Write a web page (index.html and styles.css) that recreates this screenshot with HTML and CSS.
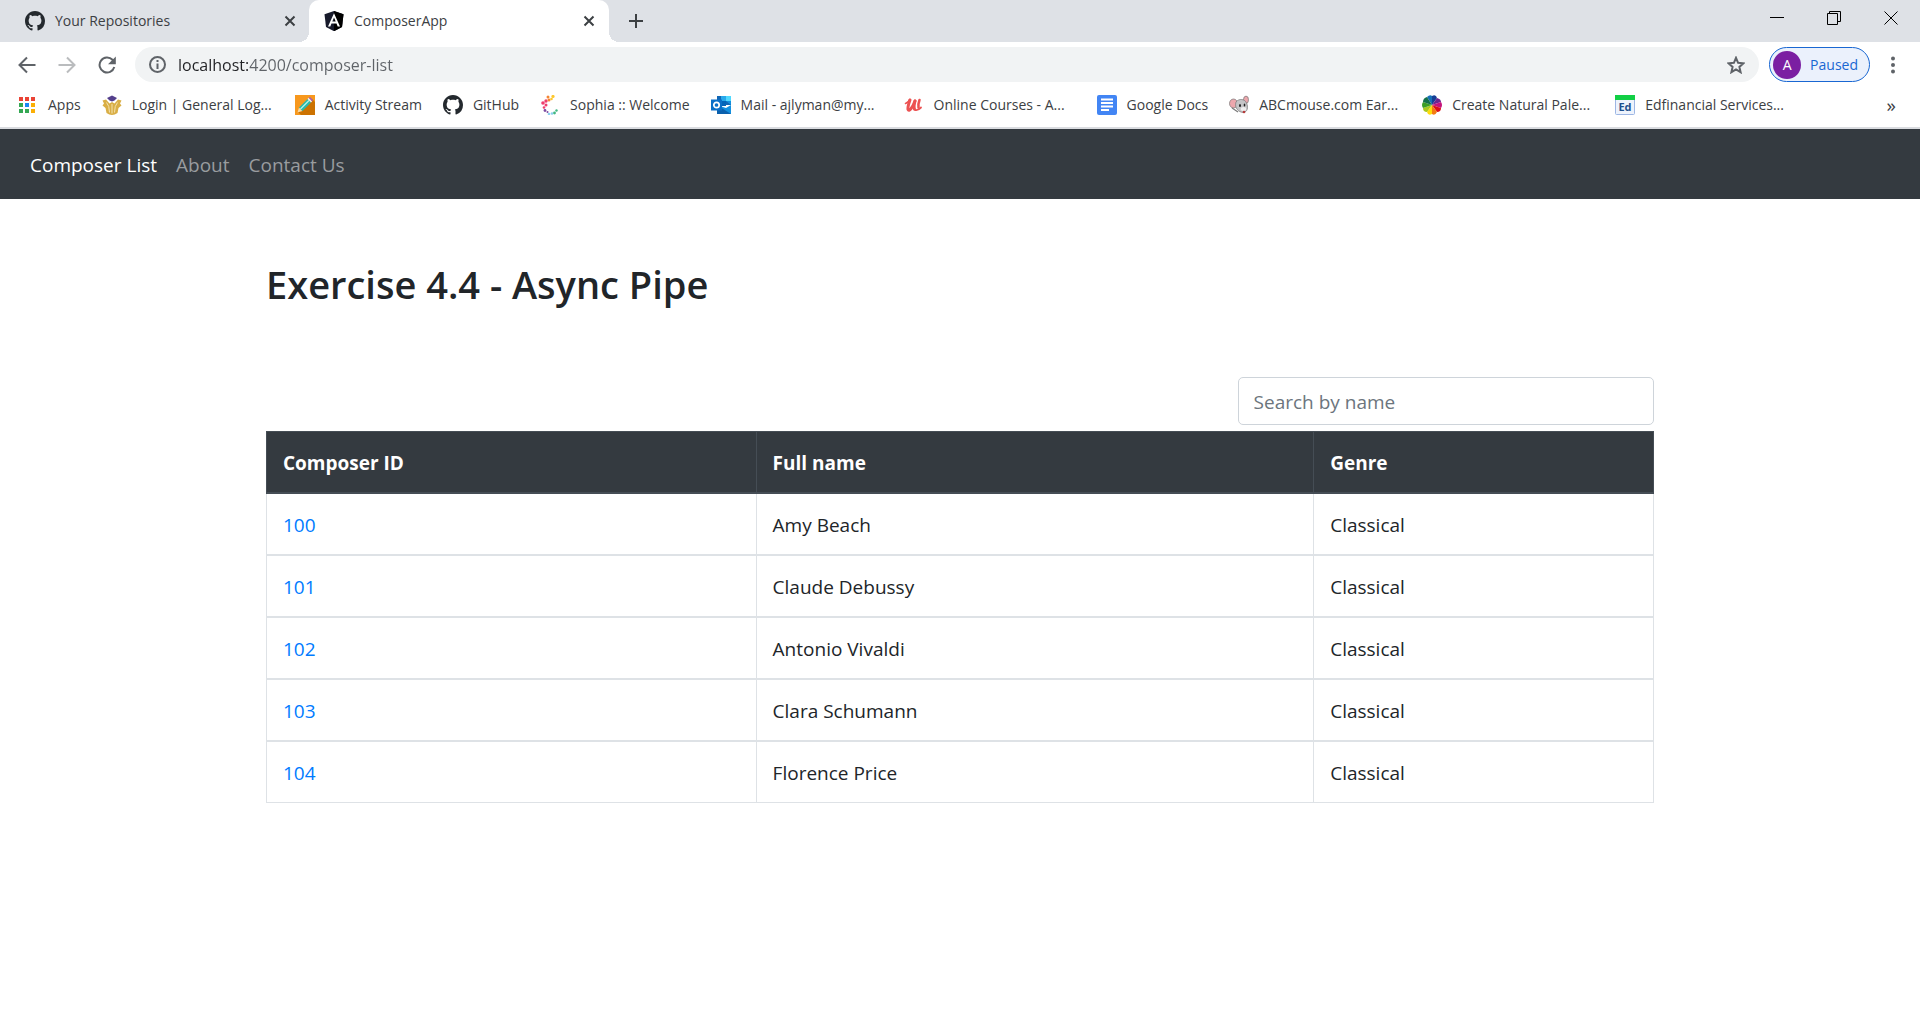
FILE: index.html
```html
<!DOCTYPE html>
<html lang="en">
<head>
<meta charset="utf-8">
<meta name="viewport" content="width=device-width, initial-scale=1">
<title>ComposerApp</title>
<link rel="stylesheet" href="styles.css">
</head>
<body>
<svg class="sprite" aria-hidden="true">
  <symbol id="github" viewBox="0 0 16 16"><path fill="#24292e" d="M8 0C3.58 0 0 3.58 0 8c0 3.54 2.29 6.53 5.47 7.59.4.07.55-.17.55-.38 0-.19-.01-.82-.01-1.49-2.01.37-2.53-.49-2.69-.94-.09-.23-.48-.94-.82-1.13-.28-.15-.68-.52-.01-.53.63-.01 1.08.58 1.23.82.72 1.21 1.87.87 2.33.66.07-.52.28-.87.51-1.07-1.78-.2-3.64-.89-3.64-3.95 0-.87.31-1.59.82-2.15-.08-.2-.36-1.02.08-2.12 0 0 .67-.21 2.2.82.64-.18 1.32-.27 2-.27s1.36.09 2 .27c1.53-1.04 2.2-.82 2.2-.82.44 1.1.16 1.92.08 2.12.51.56.82 1.27.82 2.15 0 3.07-1.87 3.75-3.65 3.95.29.25.54.73.54 1.48 0 1.07-.01 1.93-.01 2.2 0 .21.15.46.55.38A8.01 8.01 0 0 0 16 8c0-4.42-3.58-8-8-8z"/></symbol>
  <symbol id="cross" viewBox="0 0 12 12"><path d="M1.500 1.500l9 9m0-9l-9 9" fill="none" stroke="#3c4043" stroke-width="2"/></symbol>
</svg>

<header class="browser">
  <div class="tab-strip">
    <div class="tab">
      <svg class="icon"><use href="#github"/></svg>
      <span class="tab-title">Your Repositories</span>
      <button class="icon-button tab-close" aria-label="Close tab"><svg width="12" height="12"><use href="#cross"/></svg></button>
    </div>
    <div class="tab tab-active">
      <svg class="icon" viewBox="0 0 20 20"><path fill="#171a2b" d="M10 0l9.500 3.300L18 16l-8 4.200L2 16 .5 3.300z"/><path fill="#000" d="M10 0l9.500 3.300L18 16l-8 4.200z"/><path fill="#fff" fill-rule="evenodd" d="M10 2.200L4 15.500h2.300l1.200-3h5l1.200 3H16zm0 4.200l1.700 4.200H8.300z"/></svg>
      <span class="tab-title">ComposerApp</span>
      <button class="icon-button tab-close" aria-label="Close tab"><svg width="12" height="12"><use href="#cross"/></svg></button>
    </div>
    <button class="icon-button new-tab" aria-label="New tab"><svg width="16" height="16" viewBox="0 0 16 16"><path d="M8 1v14M1 8h14" stroke="#3c4043" stroke-width="2"/></svg></button>
    <div class="window-controls">
      <button class="icon-button" aria-label="Minimize"><svg width="14" height="14" viewBox="0 0 14 14"><path d="M0 6.500h14" stroke="#000"/></svg></button>
      <button class="icon-button" aria-label="Restore"><svg width="14" height="14" viewBox="0 0 14 14"><path d="M.5 2.500h10v11H.5zM2.500 2.500v-2h11v10h-3" fill="none" stroke="#000"/></svg></button>
      <button class="icon-button" aria-label="Close"><svg width="14" height="14" viewBox="0 0 14 14"><path d="M.5.5l13 13m0-13l-13 13" stroke="#000"/></svg></button>
    </div>
  </div>

  <div class="toolbar">
    <button class="icon-button" aria-label="Back"><svg width="18" height="18" viewBox="0 0 18 18"><path d="M17.500 9H2m7-7.500L1.500 9 9 16.500" fill="none" stroke="#5f6368" stroke-width="2"/></svg></button>
    <button class="icon-button" aria-label="Forward"><svg width="18" height="18" viewBox="0 0 18 18"><path d="M.5 9H16M9 1.500L16.500 9 9 16.500" fill="none" stroke="#babcbe" stroke-width="2"/></svg></button>
    <button class="icon-button" aria-label="Reload"><svg width="18" height="18" viewBox="0 0 18 18"><path d="M16.300 11A7.500 7.500 0 1 1 14.500 3.800L16 5.500" fill="none" stroke="#5f6368" stroke-width="2"/><path fill="#5f6368" d="M17.800 .5v7.700H10z"/></svg></button>
    <div class="omnibox">
      <svg width="17" height="17" viewBox="0 0 17 17"><circle cx="8.500" cy="8.500" r="7.500" fill="none" stroke="#5f6368" stroke-width="2"/><path d="M8.500 7.500V13M8.500 4v2" stroke="#5f6368" stroke-width="2"/></svg>
      <input class="address" type="text" aria-label="Address" value="localhost:4200/composer-list">
      <button class="icon-button star" aria-label="Bookmark this page"><svg width="18" height="18" viewBox="0 0 18 18"><path d="M9 1.800l2.100 5 5.400.5-4.100 3.600 1.200 5.300L9 13.400l-4.600 2.800 1.200-5.300L1.500 7.300l5.400-.5z" fill="none" stroke="#5f6368" stroke-width="2"/></svg></button>
    </div>
    <button class="profile"><span class="avatar">A</span><span>Paused</span></button>
    <button class="icon-button menu" aria-label="Menu"><svg width="6" height="18" viewBox="0 0 6 18"><g fill="#5f6368"><circle cx="3" cy="2.500" r="2"/><circle cx="3" cy="9" r="2"/><circle cx="3" cy="15.500" r="2"/></g></svg></button>
  </div>

  <nav class="bookmarks" aria-label="Bookmarks">
    <a href="#"><svg class="icon" viewBox="0 0 20 20"><path fill="#ea4335" d="M1 2h4v4H1zm6 0h4v4H7zm6 0h4v4h-4z"/><path fill="#34a853" d="M1 8h4v4H1zm0 6h4v4H1zm6 0h4v4H7z"/><path fill="#1a88f5" d="M7 8h4v4H7z"/><path fill="#fbaf05" d="M13 8h4v4h-4zm0 6h4v4h-4z"/></svg><span>Apps</span></a>
    <a href="#"><svg class="icon" viewBox="0 0 20 20"><path fill="#d9ae45" d="M.5 5.500L4 4.500l3.500 4L10 7l2.500 1.500 3.500-4 3.500 1-1.500 3 1.500 2-3 2.500-1 5q-5.500 4-11 0l-1-5-3-2.500 1.500-2z"/><path d="M4.500 7.500q3 3 3 10M15.500 7.500q-3 3-3 10M10 9v9.500" fill="none" stroke="#f3e2b0"/><path fill="#54408c" d="M5 3l5-2.500L15 3l-2.500 2.500L10 6.500 7.500 5.500z"/></svg><span class="clipped">Login | General Log...</span></a>
    <a href="#"><svg class="icon" viewBox="0 0 20 20"><path fill="#f7981d" d="M0 0h20v20H0z"/><path fill="#cc7200" d="M17 4l3 3v13H6l-3-3z"/><path fill="#f8d9a4" d="M2.500 17.500l1.500-5 3.500 3.500z"/><path fill="#28b8a8" d="M4 12.500L12.500 4 16 7.500 7.500 16z"/><path d="M5.500 14l8.500-8.500" stroke="#b8f2e8" stroke-width="1.300"/><path fill="#eee" d="M12.500 4l1.200-1.200 3.500 3.500L16 7.500z"/><path fill="#a45bb8" d="M13.700 2.800l1.300-.8 3 3-.8 1.300z"/></svg><span>Activity Stream</span></a>
    <a href="#"><svg class="icon"><use href="#github"/></svg><span>GitHub</span></a>
    <a href="#"><svg class="icon" viewBox="0 0 20 20"><g fill="#ef3e6d"><circle cx="3" cy="8" r="1.800"/><circle cx="6" cy="6" r="1.700"/><circle cx="6" cy="10" r="1.500"/><circle cx="4" cy="12.500" r="1.300"/></g><g fill="#f58634"><circle cx="8" cy="2" r="1.500"/><circle cx="9" cy="5" r="1.500"/></g><g fill="#fdc82f"><circle cx="13" cy="1.500" r="1.600"/><circle cx="11.500" cy="4" r="1.300"/></g><g fill="#7c4ba0"><circle cx="5" cy="15.500" r="1.400"/><circle cx="7.500" cy="17" r="1"/></g><g fill="#8bd0ef"><circle cx="9" cy="19" r="1.300"/><circle cx="12" cy="18.500" r="1.300"/></g><g fill="#41b883"><circle cx="14.500" cy="18" r="1.400"/><circle cx="16.500" cy="15.500" r="1.200"/></g></svg><span>Sophia :: Welcome</span></a>
    <a href="#"><svg class="icon" viewBox="0 0 20 20"><path fill="#1066b5" d="M6 1h14v9H6z"/><path fill="#28a8ea" d="M10 1h5v5h-5z"/><path fill="#50d9ff" d="M15 1h5v5h-5z"/><path fill="#0364b8" d="M10 6h5v5h-5z"/><path fill="#1490df" d="M15 6h5v13H6V10l9 3 5-3z"/><path fill="#0a60ad" d="M6 10l14 9H6z"/><path fill="#0a6fc8" d="M0 4.500h11v11H0z"/><circle cx="5.500" cy="10" r="2.700" fill="none" stroke="#fff" stroke-width="1.700"/></svg><span class="clipped">Mail - ajlyman@my...</span></a>
    <a href="#"><svg class="icon" viewBox="0 0 20 20"><g fill="none" stroke="#ec5252" stroke-linecap="round"><path d="M1.500 8.500Q4.500 7.500 5.500 4.500" stroke-width="1.500"/><path d="M6 5Q3.500 12 4 14.500C5 17 8.500 13 11 6" stroke-width="3"/><path d="M11 6Q9.500 12 10.500 14" stroke-width="3"/><path d="M10.500 14.500Q13 16.500 17 12.500" stroke-width="1.800"/><path d="M15.500 5Q14 9 14.500 12.500" stroke-width="2.500"/></g></svg><span class="clipped">Online Courses - A...</span></a>
    <a href="#"><svg class="icon" viewBox="0 0 20 20"><rect width="20" height="20" rx="2" fill="#4285f4"/><path d="M4 4.500h12M4 8h12M4 11.500h12M4 15h8" stroke="#fff" stroke-width="1.800"/></svg><span>Google Docs</span></a>
    <a href="#"><svg class="icon" viewBox="0 0 20 20"><g stroke="#777" stroke-width=".7"><ellipse cx="4.500" cy="8.500" rx="4" ry="4.500" fill="#eca7ad"/><ellipse cx="17" cy="4.800" rx="2.500" ry="3.700" fill="#eca7ad"/><path fill="#c4c4c6" d="M7 7c3-4 9-3 10.500 1 2 4 1 9-3 9.500C10 17.500 5 13 7 7z"/></g><ellipse cx="14.500" cy="14" rx="2.800" ry="2" fill="#eee"/><ellipse cx="11" cy="10.500" rx="1" ry="1.500" fill="#222"/><ellipse cx="15.500" cy="10" rx=".8" ry="1.500" fill="#222"/><circle cx="15" cy="17" r="1.300" fill="#b63a3a"/><path d="M3 13l6 4" stroke="#777" stroke-width="1.200"/></svg><span class="clipped">ABCmouse.com Ear...</span></a>
    <a href="#"><svg class="icon" viewBox="0 0 20 20"><path fill="#1670b8" d="M10 10L5 2Q8-1 10 1z"/><path fill="#163f96" d="M10 10V1q4-2 5 2z"/><path fill="#6b2590" d="M10 10l5-7q4 1 4 4z"/><path fill="#c4137d" d="M10 10l9-3q2 3 0 6z"/><path fill="#dc1019" d="M10 10l9 3q0 4-4 4z"/><path fill="#f47b12" d="M10 10l5 7q-2 4-5 2z"/><path fill="#ffdc0a" d="M10 10v9q-4 2-5-2z"/><path fill="#a9c91e" d="M10 10l-5 7q-4 0-4-4z"/><path fill="#3c9e25" d="M10 10l-9 3q-2-3 0-6z"/><path fill="#14714a" d="M10 10L1 7q0-4 4-5z"/></svg><span class="clipped">Create Natural Pale...</span></a>
    <a href="#"><svg class="icon" viewBox="0 0 20 20"><rect x=".5" y=".5" width="19" height="19" rx="1" fill="#eef3fc" stroke="#9db6e4"/><path fill="#12cf45" d="M0 0h20v5H0z"/><text x="10" y="16" text-anchor="middle" class="ed-mark">Ed</text></svg><span class="clipped">Edfinancial Services...</span></a>
    <button class="icon-button overflow" aria-label="More bookmarks">»</button>
  </nav>
</header>

<nav class="site-nav" aria-label="Main">
  <a class="active" href="#">Composer List</a>
  <a href="#">About</a>
  <a href="#">Contact Us</a>
</nav>

<main class="container">
  <h1>Exercise 4.4 - Async Pipe</h1>
  <form class="search">
    <input type="text" placeholder="Search by name" aria-label="Search by name">
  </form>
  <table class="composers">
    <colgroup><col class="col-id"><col class="col-name"><col></colgroup>
    <thead><tr><th scope="col">Composer ID</th><th scope="col">Full name</th><th scope="col">Genre</th></tr></thead>
    <tbody>
      <tr><td><a href="#">100</a></td><td>Amy Beach</td><td>Classical</td></tr>
      <tr><td><a href="#">101</a></td><td>Claude Debussy</td><td>Classical</td></tr>
      <tr><td><a href="#">102</a></td><td>Antonio Vivaldi</td><td>Classical</td></tr>
      <tr><td><a href="#">103</a></td><td>Clara Schumann</td><td>Classical</td></tr>
      <tr><td><a href="#">104</a></td><td>Florence Price</td><td>Classical</td></tr>
    </tbody>
  </table>
</main>
</body>
</html>
```
FILE: styles.css
```css
*, *::before, *::after { box-sizing: border-box; }

body {
  margin: 0;
  background: #fff;
  color: #212529;
  font: 19px/30px "Open Sans", "Noto Sans", sans-serif;
}

a { text-decoration: none; }
button, input { font: inherit; }
svg { display: block; flex: none; }
.sprite { position: absolute; width: 0; height: 0; }
.icon { width: 20px; height: 20px; }

.icon-button {
  display: flex;
  flex: none;
  align-items: center;
  justify-content: center;
  padding: 0;
  border: 0;
  background: none;
}

/* Browser window */
.browser {
  border-bottom: 2px solid #dadce0;
  color: #3c4043;
  font-size: 14px;
  line-height: 20px;
}

.tab-strip {
  display: flex;
  height: 42px;
  padding-right: 1px;
  background: #dee1e6;
}

.tab {
  display: flex;
  align-items: center;
  gap: 10px;
  width: 300px;
  padding: 0 14px 0 15px;
}
.tab:first-child { width: 309px; padding: 0 13px 0 25px; }
.tab-active {
  position: relative;
  border-radius: 10px 10px 0 0;
  background: #fff;
}
.tab-active::before, .tab-active::after {
  content: "";
  position: absolute;
  bottom: 0;
  width: 10px;
  height: 10px;
}
.tab-active::before {
  right: 100%;
  background: radial-gradient(circle at 0 0, transparent 10px, #fff 10px);
}
.tab-active::after {
  left: 100%;
  background: radial-gradient(circle at 100% 0, transparent 10px, #fff 10px);
}
.tab-title { flex: 1; }
.new-tab { width: 54px; }

.window-controls { display: flex; margin-left: auto; }
.window-controls button { width: 57px; height: 36px; }

.toolbar {
  display: flex;
  align-items: center;
  height: 45px;
  padding: 0 24px 0 18px;
}
.toolbar > .icon-button { width: 18px; margin-right: 22px; }
.toolbar > .icon-button:nth-child(3) { margin-right: 19px; }
.toolbar > .menu { width: 6px; margin: 0 0 0 20px; }

.omnibox {
  display: flex;
  flex: 1;
  align-items: center;
  gap: 12px;
  height: 35px;
  padding: 0 14px;
  border-radius: 18px;
  background: #f1f3f4;
}
.address {
  flex: 1;
  min-width: 0;
  padding: 0;
  border: 0;
  outline: 0;
  color: #5f6368;
  font-size: 16px;
  /* host name is darker than the rest of the URL */
  background: linear-gradient(to right, #202124 70px, #5f6368 70px);
  -webkit-background-clip: text;
  background-clip: text;
  -webkit-text-fill-color: transparent;
}

.profile {
  display: flex;
  align-items: center;
  gap: 9px;
  height: 35px;
  margin-left: 10px;
  padding: 0 11px 0 3px;
  border: 1px solid #1967d2;
  border-radius: 18px;
  background: #ebf1fc;
  color: #1967d2;
}
.avatar {
  width: 28px;
  border-radius: 50%;
  background: #7b1fa2;
  color: #fff;
  line-height: 28px;
}

.bookmarks {
  display: flex;
  align-items: center;
  gap: 21px;
  height: 40px;
  padding: 0 24px 4px 18px;
}
.bookmarks a {
  display: flex;
  align-items: center;
  gap: 10px;
  color: #3c4043;
  white-space: nowrap;
}
.clipped { width: 142px; }
.overflow { margin-left: auto; font-size: 19px; color: #3c4043; }
.ed-mark { fill: #1d4f8c; font-size: 11px; font-weight: 700; }

/* Application */
.site-nav {
  display: flex;
  align-items: center;
  gap: 19px;
  min-height: 70px;
  padding: 21px 30px 19px;
  background: #343a40;
}
.site-nav a { color: #999c9f; }
.site-nav .active { color: #fff; }

.container {
  max-width: 1424px;
  margin: 0 auto;
  padding: 60px 18px;
}

h1 {
  margin: 0 0 68px;
  font-size: 38px;
  font-weight: 600;
  line-height: 50px;
}

.search {
  display: flex;
  justify-content: flex-end;
  margin-bottom: 6px;
}
.search input {
  width: 30%;
  height: 48px;
  padding: 1px 15px 0;
  border: 1px solid #ced4da;
  border-radius: 5px;
  color: #495057;
}
.search input::placeholder { color: #6c757d; opacity: 1; }

.composers {
  width: 100%;
  table-layout: fixed;
  border-collapse: collapse;
}
.col-id { width: 35.3%; }
.col-name { width: 40.2%; }
.composers th, .composers td {
  padding: 16px 16px 14px;
  border: 1px solid #dee2e6;
  text-align: left;
}
.composers td { border-top-width: 2px; }
.composers th {
  border-color: #454d55;
  border-bottom-width: 2px;
  background: #343a40;
  color: #fff;
}
.composers td a { color: #007bff; }
```
